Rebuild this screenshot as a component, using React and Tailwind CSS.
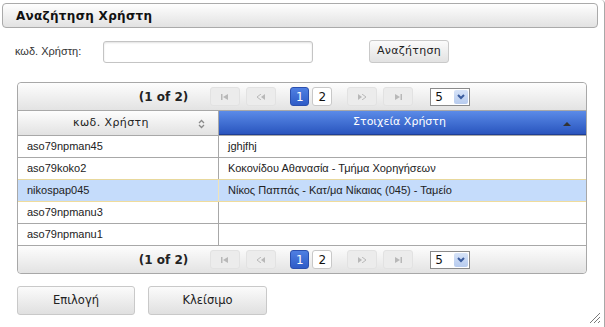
const rows = [
  ['aso79npman45', 'jghjfhj'],
  ['aso79koko2', 'Κοκονίδου Αθανασία - Τμήμα Χορηγήσεων'],
  ['nikospap045', 'Νίκος Παππάς - Κατ/μα Νίκαιας (045) - Ταμείο'],
  ['aso79npmanu3', ''],
  ['aso79npmanu1', ''],
];

function NavIcon({ kind }) {
  const c = '#b8b8b8';
  return (
    <svg width="10" height="6" viewBox="0 0 10 6">
      {kind === 'first' && (
        <>
          <rect x="1" y="0" width="1.5" height="6" fill={c} />
          <path d="M8 0 L3 3 L8 6 Z" fill={c} />
        </>
      )}
      {kind === 'prev' && (
        <>
          <path d="M5 0 L1 3 L5 6" fill="none" stroke={c} strokeWidth="1" />
          <path d="M9 0 L5 3 L9 6 Z" fill={c} />
        </>
      )}
      {kind === 'next' && (
        <>
          <path d="M1 0 L5 3 L1 6 Z" fill={c} />
          <path d="M5 0 L9 3 L5 6" fill="none" stroke={c} strokeWidth="1" />
        </>
      )}
      {kind === 'last' && (
        <>
          <path d="M2 0 L7 3 L2 6 Z" fill={c} />
          <rect x="7.5" y="0" width="1.5" height="6" fill={c} />
        </>
      )}
    </svg>
  );
}

function Pager({ bottom }) {
  const navBtn =
    'flex items-center justify-center w-[30px] h-[19px] rounded-[3px] border border-[#e2e2e2] bg-[#ececec]';
  return (
    <div
      className={`h-[28px] flex items-center justify-center bg-gradient-to-b from-[#fdfdfd] to-[#e3e3e3] ${
        bottom ? 'rounded-b-[4px] border-t border-[#a8a8a8]' : 'rounded-t-[4px] border-b border-[#a8a8a8]'
      }`}
    >
      <span className="font-['DejaVu_Sans',sans-serif] font-bold text-[12px] text-[#222] mr-[22px] ml-[5px]">
        (1 of 2)
      </span>
      <span className={navBtn}>
        <NavIcon kind="first" />
      </span>
      <span className={`${navBtn} ml-[6px]`}>
        <NavIcon kind="prev" />
      </span>
      <span className="ml-[14px] flex items-center justify-center w-[19px] h-[19px] rounded-[3px] border border-[#2b4fae] bg-gradient-to-b from-[#4f7fe2] to-[#2f5cc7] text-white text-[12px] font-['DejaVu_Sans',sans-serif]">
        1
      </span>
      <span className="ml-[3px] flex items-center justify-center w-[20px] h-[19px] rounded-[3px] border border-[#c8c8c8] bg-white text-[#111] text-[12px] font-['DejaVu_Sans',sans-serif]">
        2
      </span>
      <span className={`${navBtn} ml-[15px]`}>
        <NavIcon kind="next" />
      </span>
      <span className={`${navBtn} ml-[6px]`}>
        <NavIcon kind="last" />
      </span>
      <span className="ml-[17px] flex items-center w-[40px] h-[18px] border border-[#8a8a8a] bg-white">
        <span className="flex-1 pl-[4px] text-[12px] text-[#111] font-['DejaVu_Sans',sans-serif] leading-none">5</span>
        <span className="w-[14px] h-[14px] mr-[1px] flex items-center justify-center bg-gradient-to-b from-[#d6e3f8] to-[#b7cbee] rounded-[2px]">
          <svg width="8" height="6" viewBox="0 0 8 6">
            <path d="M1 1 L4 4 L7 1" fill="none" stroke="#3a5c9e" strokeWidth="2" />
          </svg>
        </span>
      </span>
    </div>
  );
}

export default function App() {
  return (
    <div className="relative w-[605px] h-[327px] bg-white border-r border-[#a8a8a8] rounded-tr-[4px] font-['Liberation_Sans',Arial,sans-serif] text-[11px] text-[#222] overflow-hidden">
      {/* title bar */}
      <div className="mt-[3px] ml-[2px] mr-[6px] h-[25px] flex items-center pl-[13px] rounded-[4px] border border-[#aaaaaa] bg-gradient-to-b from-[#fefefe] to-[#e2e2e2]">
        <span className="font-['DejaVu_Sans',sans-serif] font-bold text-[12px] tracking-[0.3px] text-[#111]">
          Αναζήτηση Χρήστη
        </span>
      </div>

      {/* search row */}
      <div className="mt-[12px] flex items-center h-[23px]">
        <span className="ml-[15px] w-[88px] text-[11px] text-[#333]">κωδ. Χρήστη:</span>
        <div className="w-[210px] h-[22px] rounded-[3px] border border-[#c4c4c4] bg-white shadow-[inset_0_1px_2px_rgba(0,0,0,0.12)]" />
        <button className="ml-[56px] w-[80px] h-[23px] rounded-[3px] border border-[#c9c9c9] bg-gradient-to-b from-[#fbfbfb] to-[#e2e2e2] font-['DejaVu_Sans',sans-serif] text-[11px] text-[#222] tracking-[0.3px]">
          Αναζήτηση
        </button>
      </div>

      {/* data table */}
      <div className="mt-[19px] ml-[17px] w-[570px] rounded-[4px] border border-[#a8a8a8]">
        <Pager />
        <div className="flex h-[25px] border-b border-[#a8a8a8]">
          <div className="w-[201px] relative flex items-center justify-center pr-[14px] bg-gradient-to-b from-[#fdfdfd] to-[#e2e2e2] border-r border-[#a8a8a8] font-['DejaVu_Sans',sans-serif] text-[11px] text-[#222] tracking-[0.4px]">
            κωδ. Χρήστη
            <svg className="absolute right-[13px] top-[8px]" width="7" height="10" viewBox="0 0 7 10">
              <path d="M1 4 L3.5 1.5 L6 4" fill="none" stroke="#8a8a8a" strokeWidth="1.3" />
              <path d="M1 6 L3.5 8.5 L6 6" fill="none" stroke="#8a8a8a" strokeWidth="1.3" />
            </svg>
          </div>
          <div className="flex-1 relative flex items-center justify-center pr-[6px] bg-gradient-to-b from-[#5b8be8] to-[#2a55be] border-b border-[#1e3e94] font-['DejaVu_Sans',sans-serif] text-[11px] text-white">
            Στοιχεία Χρήστη
            <svg className="absolute right-[15px] top-[11px]" width="8" height="4" viewBox="0 0 8 4">
              <path d="M0 4 L4 0 L8 4 Z" fill="#333" />
            </svg>
          </div>
        </div>
        {rows.map(([code, info], i) => {
          const sel = i === 2;
          return (
            <div
              key={code}
              className={`flex h-[22px] ${
                sel ? 'bg-[#c5dcfb] border-b border-[#f0dc9c]' : 'bg-white border-b border-[#a8a8a8]'
              } ${i === 1 ? 'border-b-[#e8d89c]' : ''}`}
            >
              <div className={`w-[201px] flex items-center pl-[9px] border-r ${sel ? 'border-[#f0e4b8]' : 'border-[#a8a8a8]'}`}>
                {code}
              </div>
              <div className="flex-1 flex items-center pl-[9px]">{info}</div>
            </div>
          );
        })}
        <div className="-mt-px">
          <Pager bottom />
        </div>
      </div>

      {/* footer buttons */}
      <div className="mt-[12px] ml-[17px] flex gap-[13px]">
        <button className="w-[118px] h-[29px] rounded-[3px] border border-[#c9c9c9] bg-gradient-to-b from-[#fbfbfb] to-[#e0e0e0] font-['DejaVu_Sans',sans-serif] text-[11.5px] text-[#222]">
          Επιλογή
        </button>
        <button className="w-[119px] h-[29px] rounded-[3px] border border-[#c9c9c9] bg-gradient-to-b from-[#fbfbfb] to-[#e0e0e0] font-['DejaVu_Sans',sans-serif] text-[11.5px] text-[#222]">
          Κλείσιμο
        </button>
      </div>

      {/* resize grip */}
      <svg className="absolute right-[3px] bottom-[3px]" width="12" height="12" viewBox="0 0 12 12">
        <path d="M1 11 L11 1 M5 11 L11 5 M9 11 L11 9" stroke="#7a7a7a" strokeWidth="1" />
      </svg>
    </div>
  );
}
